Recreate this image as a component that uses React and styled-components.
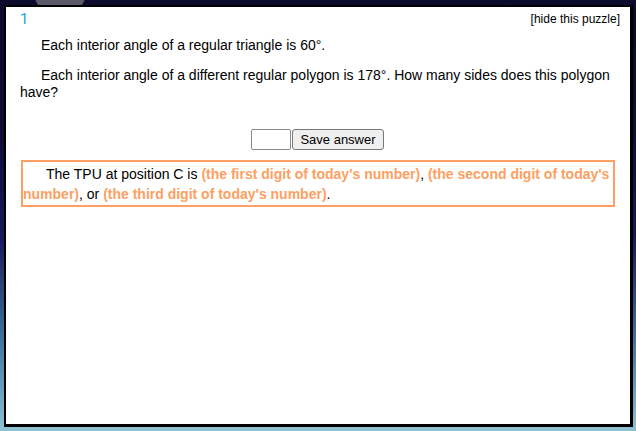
import React from "react";
import styled, { createGlobalStyle } from "styled-components";

const Global = createGlobalStyle`
  html, body { margin: 0; padding: 0; height: 100%; }
  body {
    font-family: "Liberation Sans", Arial, Helvetica, sans-serif;
    background:
      radial-gradient(circle at 60px -10px, #5a5a6a 0, #5a5a6a 26px, transparent 27px),
      linear-gradient(180deg, #0b0a2c 0%, #0e0c33 30%, #18185a 55%, #3d6f9a 78%, #8fc3d4 100%);
    overflow: hidden;
  }
  #root { height: 100%; }
`;

const Stage = styled.div`
  height: 100%;
  box-sizing: border-box;
  padding: 5px 3px 4px 4px;
  display: flex;
`;

const Panel = styled.div`
  flex: 1;
  background: #fff;
  border: 2px solid #000;
  border-right-width: 3px;
  border-bottom-width: 3px;
  padding: 3px 10px 0 14px;
  color: #000;
`;

const Header = styled.div`
  display: flex;
  justify-content: space-between;
  align-items: flex-start;
  height: 27px;
`;

const Number = styled.span`
  font-family: Roboto, "Liberation Sans", sans-serif;
  font-weight: 400;
  font-size: 15px;
  line-height: 18px;
  color: #1e9fdc;
`;

const HideLink = styled.span`
  font-size: 12px;
  line-height: 18px;
  color: #000;
  cursor: pointer;
`;

const Body = styled.div`
  margin-right: 5px;
`;

const Para = styled.p`
  margin: 0 0 ${(p) => p.$gap || 0}px;
  font-size: 14px;
  line-height: 17px;
  text-indent: 21px;
`;

const AnswerRow = styled.div`
  display: flex;
  justify-content: center;
  margin-top: 28px;
`;

const AnswerInput = styled.input`
  box-sizing: border-box;
  width: 40px;
  height: 21px;
  border: 1px solid #8a8a8a;
  border-radius: 2px;
  padding: 0 2px;
  margin: 0;
  font: 13px "Liberation Sans", Arial, sans-serif;
`;

const SaveButton = styled.button`
  box-sizing: border-box;
  height: 21px;
  padding: 0 7px;
  margin: 0 0 0 1px;
  border: 1px solid #777;
  border-radius: 3px;
  background: #efefef;
  font: 13px "Liberation Sans", Arial, sans-serif;
  color: #000;
`;

const HintBox = styled.div`
  margin: 10px 0 0 1px;
  border: 2px solid #fea064;
  padding: 2px 1px 1px 0;
  font-size: 14px;
  line-height: 20px;
  text-indent: 23px;
`;

const Hint = styled.b`
  color: #fe9f62;
  font-weight: bold;
`;

export default function App() {
  return (
    <>
      <Global />
      <Stage>
        <Panel>
          <Header>
            <Number>1</Number>
            <HideLink>[hide this puzzle]</HideLink>
          </Header>
          <Body>
            <Para $gap={13}>Each interior angle of a regular triangle is 60°.</Para>
            <Para>
              Each interior angle of a different regular polygon is 178°. How many sides does this polygon have?
            </Para>
            <AnswerRow>
              <AnswerInput type="text" />
              <SaveButton>Save answer</SaveButton>
            </AnswerRow>
            <HintBox>
              The TPU at position C is <Hint>(the first digit of today's number)</Hint>,{" "}
              <Hint>(the second digit of today's number)</Hint>, or{" "}
              <Hint>(the third digit of today's number)</Hint>.
            </HintBox>
          </Body>
        </Panel>
      </Stage>
    </>
  );
}
